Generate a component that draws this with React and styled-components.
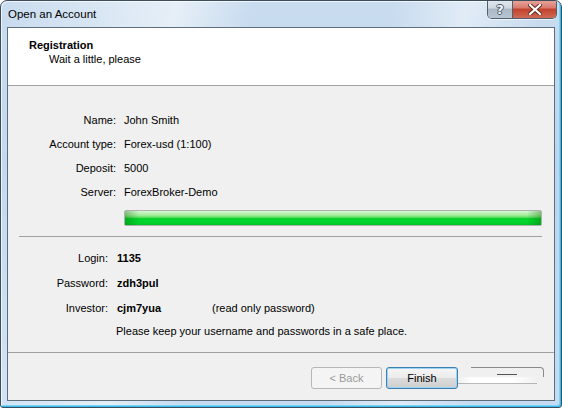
import React from "react";
import styled, { createGlobalStyle } from "styled-components";

const GlobalStyle = createGlobalStyle`
  html, body {
    margin: 0;
    padding: 0;
    background: #ffffff;
  }
  body {
    font-family: "Liberation Sans", Arial, sans-serif;
  }
`;

const details = [
  { label: "Name:", value: "John Smith" },
  { label: "Account type:", value: "Forex-usd (1:100)" },
  { label: "Deposit:", value: "5000" },
  { label: "Server:", value: "ForexBroker-Demo" },
];

const App = () => {
  return (
    <>
      <GlobalStyle />
      <Window>
        <TitleBar>
          <Caption>Open an Account</Caption>
          <CaptionButtons>
            <HelpButton>?</HelpButton>
            <CloseButton>
              <svg width="14" height="11" viewBox="0 0 14 11">
                <path
                  d="M2 1 L12 10 M12 1 L2 10"
                  stroke="#5a2a22"
                  strokeWidth="4"
                  strokeLinecap="square"
                />
                <path
                  d="M2 1 L12 10 M12 1 L2 10"
                  stroke="#ffffff"
                  strokeWidth="2.2"
                  strokeLinecap="square"
                />
              </svg>
            </CloseButton>
          </CaptionButtons>
        </TitleBar>

        <Client>
          <Header>
            <HeaderTitle>Registration</HeaderTitle>
            <HeaderSub>Wait a little, please</HeaderSub>
          </Header>

          <Body>
            <Section $top={22}>
              {details.map((d) => (
                <Row key={d.label} $height={24}>
                  <Label $width={108}>{d.label}</Label>
                  <Value $gap={8}>{d.value}</Value>
                </Row>
              ))}
            </Section>

            <Progress>
              <ProgressFill />
            </Progress>

            <Separator $inset />

            <Section $top={8}>
              <Row $height={25}>
                <Label $width={100}>Login:</Label>
                <Value $gap={9} $bold>1135</Value>
              </Row>
              <Row $height={25}>
                <Label $width={100}>Password:</Label>
                <Value $gap={9} $bold>zdh3pul</Value>
              </Row>
              <Row $height={25}>
                <Label $width={100}>Investor:</Label>
                <Value $gap={9} $bold $width={95}>cjm7yua</Value>
                <Value>(read only password)</Value>
              </Row>
              <Row $height={22}>
                <Value $gap={108}>
                  Please keep your username and passwords in a safe place.
                </Value>
              </Row>
            </Section>

            <Separator />

            <ButtonBar>
              <Button disabled $width={71}>&lt; Back</Button>
              <Button $default $width={72}>Finish</Button>
              <GhostButton />
            </ButtonBar>
          </Body>
        </Client>
      </Window>
    </>
  );
};

export default App;

const Window = styled.div`
  width: 562px;
  height: 408px;
  box-sizing: border-box;
  border: 1px solid #3e4d5c;
  border-radius: 7px 7px 3px 3px;
  padding: 0 6px 6px 6px;
  display: flex;
  flex-direction: column;
  overflow: hidden;
  background:
    linear-gradient(100deg, transparent 0%, rgba(255,255,255,0.55) 28%, transparent 40%, transparent 62%, rgba(255,255,255,0.45) 74%, transparent 86%),
    linear-gradient(to bottom, #c9dcef 0%, #bcd5ee 40%, #c4dbf1 100%);
  box-shadow: inset 1px 1px 0 rgba(255, 255, 255, 0.7),
    inset -1px -1px 0 #36bdef, inset -2px -2px 0 #7fd4f5;
`;

const TitleBar = styled.div`
  height: 26px;
  flex: none;
  display: flex;
  justify-content: space-between;
  align-items: flex-start;
  padding-left: 1px;
`;

const Caption = styled.div`
  font-size: 11.5px;
  line-height: 26px;
  color: #000000;
`;

const CaptionButtons = styled.div`
  display: flex;
  margin-top: -1px;
  margin-right: -2px;
  height: 18px;
  border: 1px solid #50606e;
  border-top: none;
  border-radius: 0 0 5px 5px;
  overflow: hidden;
  box-shadow: 0 1px 0 rgba(255, 255, 255, 0.6);
`;

const HelpButton = styled.div`
  width: 24px;
  height: 18px;
  display: flex;
  align-items: center;
  justify-content: center;
  font-family: "DejaVu Sans", sans-serif;
  font-size: 13px;
  font-weight: bold;
  color: #f4f7fa;
  text-shadow: 1px 0 0 #4a5866, -1px 0 0 #4a5866, 0 1px 0 #4a5866, 0 -1px 0 #4a5866;
  border-right: 1px solid #50606e;
  background: linear-gradient(to bottom, #e2e8ef 0%, #cfd8e2 45%, #a9b7c6 50%, #b8c6d4 100%);
`;

const CloseButton = styled.div`
  width: 43px;
  height: 18px;
  display: flex;
  align-items: center;
  justify-content: center;
  background: linear-gradient(to bottom, #e8a89e 0%, #d77a6c 45%, #c2402c 50%, #cf6a55 100%);
`;

const Client = styled.div`
  flex: 1;
  display: flex;
  flex-direction: column;
  border: 1px solid #5d6d7c;
  background: #f0f0f0;
  font-size: 11px;
  color: #000000;
`;

const Header = styled.div`
  height: 58px;
  flex: none;
  box-sizing: border-box;
  padding: 10px 0 0 21px;
  background: #ffffff;
  border-bottom: 1px solid #a0a0a0;
`;

const HeaderTitle = styled.div`
  font-weight: bold;
  line-height: 14px;
`;

const HeaderSub = styled.div`
  line-height: 14px;
  margin-left: 20px;
`;

const Body = styled.div`
  flex: 1;
  display: flex;
  flex-direction: column;
`;

const Section = styled.div`
  display: flex;
  flex-direction: column;
  padding-top: ${(p) => p.$top}px;
`;

const Row = styled.div`
  display: flex;
  align-items: center;
  height: ${(p) => p.$height}px;
`;

const Label = styled.div`
  width: ${(p) => p.$width}px;
  flex: none;
  text-align: right;
`;

const Value = styled.div`
  margin-left: ${(p) => p.$gap || 0}px;
  width: ${(p) => (p.$width ? `${p.$width}px` : "auto")};
  flex: none;
  font-weight: ${(p) => (p.$bold ? "bold" : "normal")};
  white-space: nowrap;
`;

const Progress = styled.div`
  margin: 6px 12px 0 116px;
  height: 16px;
  box-sizing: border-box;
  border: 1px solid #b0b0b0;
  border-radius: 2px;
  padding: 0;
  background: #e6e6e6;
`;

const ProgressFill = styled.div`
  height: 100%;
  background:
    linear-gradient(to right, rgba(0, 100, 0, 0.35) 0, transparent 14px, transparent calc(100% - 14px), rgba(0, 100, 0, 0.35) 100%),
    linear-gradient(to bottom, #d6f7d2 0%, #a4ec9c 30%, #5fdd63 46%, #02d22c 54%, #00d52d 80%, #00c426 100%);
`;

const Separator = styled.div`
  height: 1px;
  background: #a0a0a0;
  margin: ${(p) => (p.$inset ? "10px 12px 0 11px" : "10px 0 0 0")};
`;

const ButtonBar = styled.div`
  display: flex;
  align-items: flex-start;
  justify-content: flex-end;
  padding: 14px 10px 0 0;
  gap: 4px;
`;

const Button = styled.button`
  width: ${(p) => p.$width}px;
  height: 22px;
  box-sizing: border-box;
  padding: 0;
  font-family: "Liberation Sans", Arial, sans-serif;
  font-size: 11px;
  border-radius: 3px;
  border: 1px solid ${(p) => (p.disabled ? "#b5b8ba" : p.$default ? "#3c7fb1" : "#707070")};
  color: ${(p) => (p.disabled ? "#9a9a9a" : "#000000")};
  background: ${(p) =>
    p.disabled
      ? "#f4f4f4"
      : "linear-gradient(to bottom, #f6f6f6 0%, #ebebeb 48%, #dcdcdc 52%, #cfcfcf 100%)"};
  box-shadow: ${(p) => (p.$default ? "inset 0 0 0 1px #9ad4f2" : "none")};
`;

const GhostButton = styled.div`
  position: relative;
  width: 73px;
  height: 10px;
  margin-left: 9px;
  box-sizing: border-box;
  border-top: 1px solid #8a8a8a;
  border-right: 1px solid #8a8a8a;
  border-radius: 0 4px 0 0;

  &::before {
    content: "";
    position: absolute;
    left: -14px;
    right: 6px;
    top: 9px;
    height: 6px;
    background: linear-gradient(to right, rgba(255,255,255,0) 0%, #ffffff 20%, #ffffff 70%, rgba(255,255,255,0) 100%);
    border-bottom: 1px solid rgba(120, 120, 120, 0.5);
  }

  &::after {
    content: "";
    position: absolute;
    left: 26px;
    top: 6px;
    width: 20px;
    height: 1px;
    background: #555555;
  }
`;
